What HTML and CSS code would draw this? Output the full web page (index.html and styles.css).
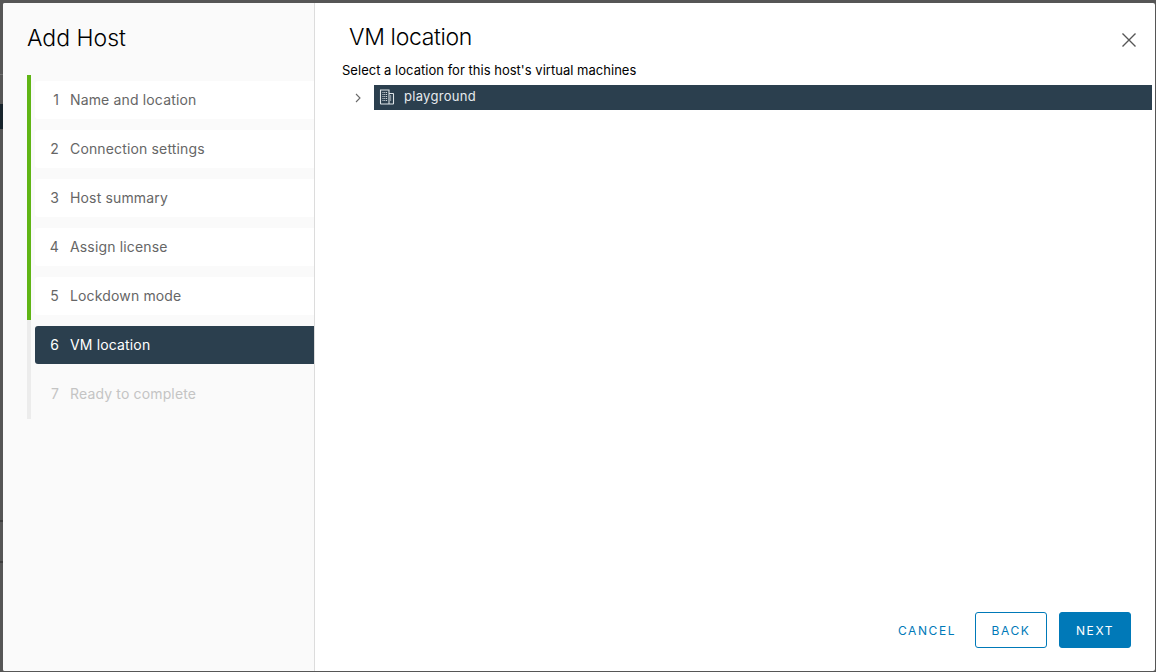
FILE: index.html
```html
<!DOCTYPE html>
<html lang="en">
<head>
<meta charset="utf-8">
<title>Add Host</title>
<link rel="stylesheet" href="styles.css">
</head>
<body>
<div class="modal">
  <aside class="side">
    <h2 class="side-title">Add Host</h2>
    <ol class="steps">
      <li class="step done"><div class="step-item"><span class="num">1</span><span>Name and location</span></div></li>
      <li class="step done"><div class="step-item"><span class="num">2</span><span>Connection settings</span></div></li>
      <li class="step done"><div class="step-item"><span class="num">3</span><span>Host summary</span></div></li>
      <li class="step done"><div class="step-item"><span class="num">4</span><span>Assign license</span></div></li>
      <li class="step done"><div class="step-item"><span class="num">5</span><span>Lockdown mode</span></div></li>
      <li class="step current"><div class="step-item"><span class="num">6</span><span>VM location</span></div></li>
      <li class="step todo"><div class="step-item"><span class="num">7</span><span>Ready to complete</span></div></li>
    </ol>
  </aside>
  <main class="content">
    <header class="head">
      <h3 class="title">VM location</h3>
      <button class="close" aria-label="Close">
        <svg width="16" height="16" viewBox="0 0 16 16"><path d="M1.500 1.500 14.500 14.500M14.500 1.500 1.500 14.500" fill="none" stroke="#565656" stroke-width="1.400"/></svg>
      </button>
    </header>
    <p class="desc">Select a location for this host's virtual machines</p>
    <div class="tree">
      <svg class="caret" width="8" height="10" viewBox="0 0 8 10"><path d="M2 1 6 5 2 9" fill="none" stroke="#6a6a6a" stroke-width="1.100"/></svg>
      <div class="tree-row">
        <svg class="dc" width="16" height="16" viewBox="0 0 16 16"><path d="M1.500 1h8.500v14H2a.5.5 0 0 1-.5-.5zM10 4.500h4a.5.5 0 0 1 .5.5v9.500a.5.5 0 0 1-.5.5h-4" fill="none" stroke="#dfe5e8" stroke-width="1.100"/><path d="M3.500 3.500h5M3.500 5.500h5M3.500 7.500h5M3.500 9.500h5M3.500 11.500h5M11 7h2M11 9h2M11 11h2" fill="none" stroke="#dfe5e8" stroke-width="1" stroke-dasharray="1 .8"/></svg>
        <span class="tree-label">playground</span>
      </div>
    </div>
    <footer class="foot">
      <button class="btn link">CANCEL</button>
      <button class="btn outline">BACK</button>
      <button class="btn primary">NEXT</button>
    </footer>
  </main>
</div>
</body>
</html>
```
FILE: styles.css
```css
* { box-sizing: border-box; }
html, body { height: 100%; }
body {
  margin: 0;
  padding: 3px 1px 1px 3px;
  background:
    linear-gradient(#18242c, #18242c) 0 104px / 3px 25px no-repeat,
    linear-gradient(#3e3e3e, #3e3e3e) 0 520px / 3px 2px no-repeat,
    linear-gradient(#3e3e3e, #3e3e3e) 0 561px / 3px 2px no-repeat,
    linear-gradient(#707070, #707070) 0 74px / 3px 1px no-repeat,
    #565656;
  font-family: Inter, "Noto Sans", sans-serif;
  overflow: hidden;
}
.modal {
  display: flex;
  height: 668px;
  background: #fff;
  border-radius: 2px;
  overflow: hidden;
}
.side {
  width: 312px;
  flex: none;
  background: #fafafa;
  border-right: 1px solid #dcdcdc;
  padding-left: 24px;
}
.side-title {
  margin: 0;
  padding-top: 20px;
  height: 72px;
  font-size: 23px;
  line-height: 30px;
  font-weight: 300;
  color: #000;
}
.steps { list-style: none; margin: 0; padding: 0; }
.step {
  border-left: 4px solid #ececec;
  padding: 6px 0 5px 4px;
}
.step:last-child { padding-bottom: 6px; }
.step.done { border-left-color: #60b515; }
.step-item {
  display: flex;
  align-items: center;
  height: 38px;
  padding-bottom: 2px;
  border-radius: 3px 0 0 3px;
  font-size: 14px;
  letter-spacing: .15px;
  color: #666;
}
.done .step-item { background: #fff; }
.current .step-item { background: #2b3f4e; color: #fff; }
.todo .step-item { color: #c4c4c4; }
.num { width: 35px; text-align: right; padding-right: 11px; flex: none; }
.content {
  flex: 1;
  display: flex;
  flex-direction: column;
  padding: 0 3px 0 27px;
}
.head {
  display: flex;
  justify-content: space-between;
  align-items: center;
  height: 55px;
  padding: 12px 15px 0 7px;
}
.title { margin: 0; font-size: 23px; line-height: 40px; font-weight: 300; letter-spacing: -.35px; color: #000; }
.close { border: 0; background: none; padding: 0; display: flex; margin-top: 8px; margin-bottom: 2px; }
.desc { margin: 4px 0 0; font-size: 13px; line-height: 16px; letter-spacing: .02px; color: #000; }
.tree { display: flex; align-items: center; margin-top: 7px; height: 25px; }
.caret { margin: 0 12px 0 12px; flex: none; }
.tree-row {
  flex: 1;
  height: 25px;
  padding-bottom: 2px;
  background: #2b3f4e;
  display: flex;
  align-items: center;
  padding-left: 5px;
  color: #e6eaed;
  font-size: 13px;
}
.dc { flex: none; }
.tree-label { margin: 0 0 2px 9px; letter-spacing: .3px; }
.foot {
  margin-top: auto;
  display: flex;
  justify-content: flex-end;
  align-items: center;
  gap: 12px;
  padding: 0 21px 23px 0;
}
.btn {
  height: 36px;
  width: 72px;
  border: 1px solid #0079b8;
  border-radius: 3px;
  font: 400 12px Inter, "Noto Sans", sans-serif;
  letter-spacing: 1.6px;
  color: #0079b8;
  background: #fff;
  padding: 0;
}
.btn.link { border-color: transparent; background: none; }
.btn.primary { background: #0079b8; color: #fff; }
```
